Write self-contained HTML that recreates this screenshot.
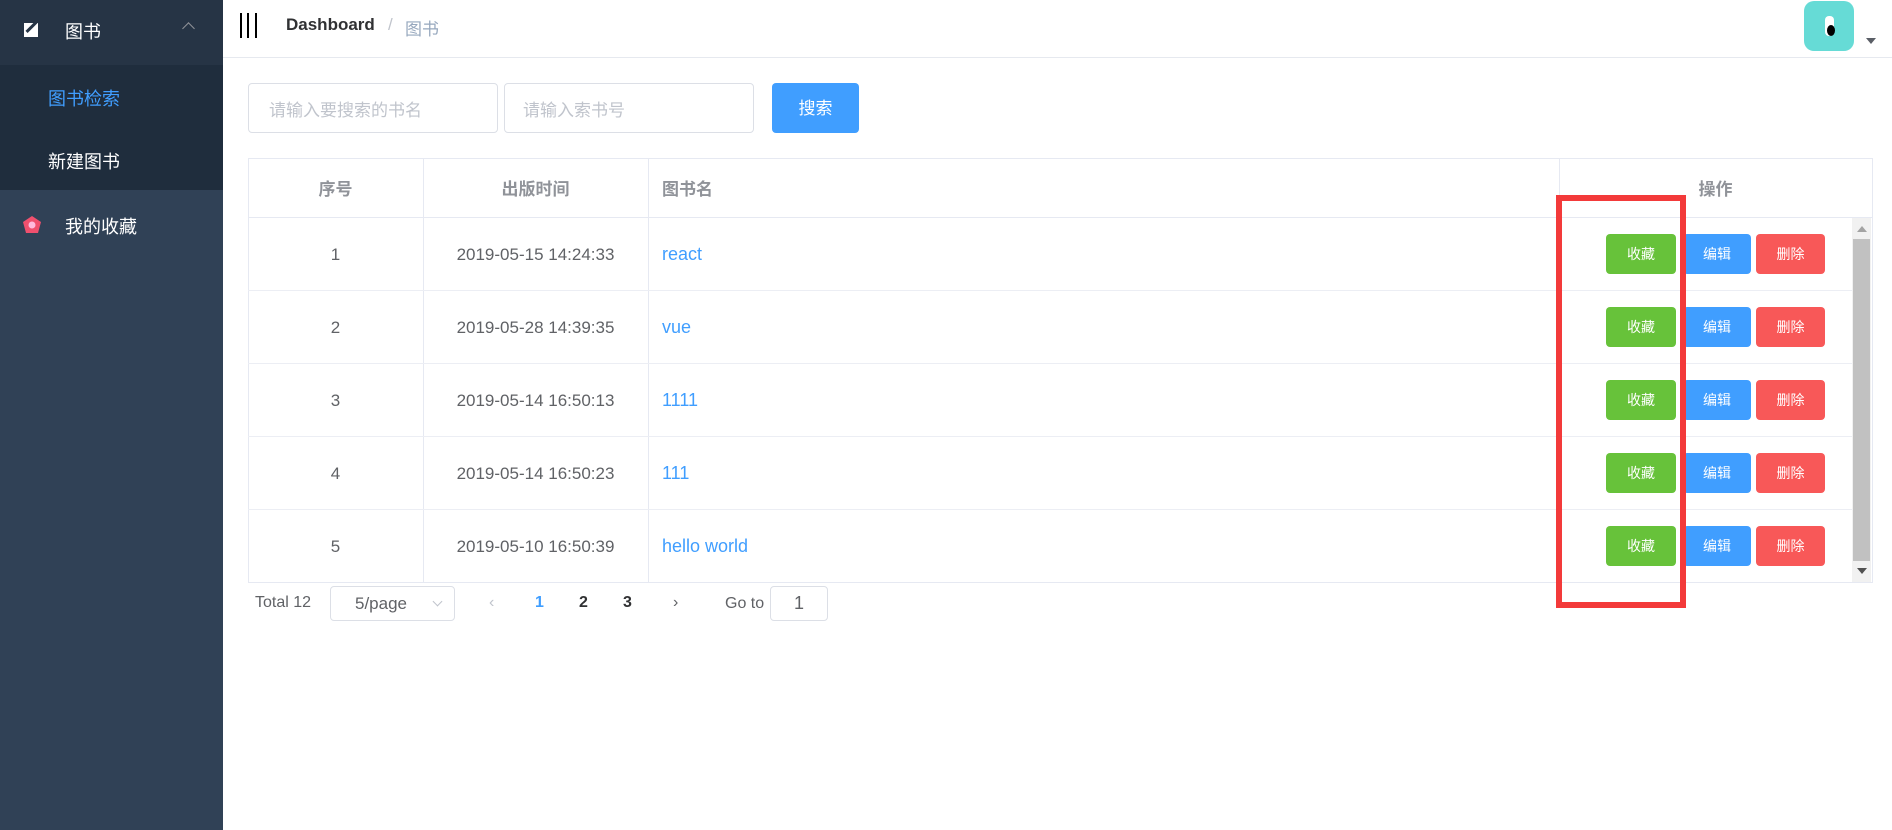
<!DOCTYPE html>
<html><head><meta charset="utf-8"><style>
*{box-sizing:border-box;margin:0;padding:0}
body{width:1892px;height:830px;overflow:hidden;background:#fff;font-family:"Liberation Sans","Noto Sans CJK SC",sans-serif;position:relative}
.abs{position:absolute}
.side{left:0;top:0;width:223px;height:830px;background:#304156}
.cell{position:absolute;display:flex;align-items:center;font-size:17px;color:#606266}
.btn{position:absolute;height:40px;border-radius:4px;color:#fff;font-size:14px;display:flex;align-items:center;justify-content:center}
</style></head><body>
<div class="abs side"></div>
<div class="abs" style="left:0;top:0;width:223px;height:65px;background:#263445"></div>
<div class="abs" style="left:0;top:65px;width:223px;height:125px;background:#1f2d3d"></div>
<div class="abs" style="left:24px;top:23px;width:14px;height:14px;background:#fff"></div>
<div class="abs" style="left:30px;top:20px;width:3px;height:14px;background:#263445;transform:rotate(45deg)"></div>
<div class="abs" style="left:65px;top:18px;font-size:18px;color:#fff">图书</div>
<div class="abs" style="left:184px;top:24px;width:9px;height:9px;border-left:1.5px solid #909399;border-top:1.5px solid #909399;transform:rotate(45deg)"></div>
<div class="abs" style="left:48px;top:85px;font-size:18px;color:#409eff">图书检索</div>
<div class="abs" style="left:48px;top:148px;font-size:18px;color:#fff">新建图书</div>
<svg class="abs" style="left:23px;top:216px" width="18" height="17" viewBox="0 0 18 17"><polygon points="9,0 18,6 15,17 3,17 0,6" fill="#f0506e"/><circle cx="9" cy="9" r="3.5" fill="#fbd"/></svg>
<div class="abs" style="left:65px;top:213px;font-size:18px;color:#fff">我的收藏</div>

<div class="abs" style="left:223px;top:57px;width:1669px;height:1px;background:#e6e9ef"></div>
<div class="abs" style="left:240px;top:13px;width:2px;height:25px;background:#000"></div>
<div class="abs" style="left:247px;top:13px;width:2px;height:25px;background:#000"></div>
<div class="abs" style="left:255px;top:13px;width:2px;height:25px;background:#000"></div>
<div class="abs" style="left:286px;top:15px;font-size:17px;font-weight:bold;color:#303133">Dashboard</div>
<div class="abs" style="left:388px;top:15px;font-size:17px;color:#c0c4cc">/</div>
<div class="abs" style="left:405px;top:15px;font-size:17px;color:#97a8be">图书</div>
<div class="abs" style="left:1804px;top:1px;width:50px;height:50px;border-radius:10px;background:#66dbd6"></div>
<div class="abs" style="left:1825px;top:16px;width:9px;height:20px;background:#fff;border-radius:4px"></div>
<div class="abs" style="left:1827px;top:25px;width:8px;height:11px;background:#000;border-radius:50%"></div>
<div class="abs" style="left:1866px;top:38px;border-left:5px solid transparent;border-right:5px solid transparent;border-top:6px solid #5a5e66"></div>

<div class="abs" style="left:248px;top:83px;width:250px;height:50px;border:1px solid #dcdfe6;border-radius:4px;font-size:17px;color:#c0c4cc;padding:12px 20px">请输入要搜索的书名</div>
<div class="abs" style="left:504px;top:83px;width:250px;height:50px;border:1px solid #dcdfe6;border-radius:4px;font-size:17px;color:#c0c4cc;padding:12px 18px">请输入索书号</div>
<div class="abs" style="left:772px;top:83px;width:87px;height:50px;background:#409eff;border-radius:4px;font-size:17px;color:#fff;display:flex;align-items:center;justify-content:center;padding-bottom:4px">搜索</div>

<div class="abs" style="left:248px;top:158px;width:1625px;height:425px;border:1px solid #e6e9f2"></div>
<div class="abs" style="left:423px;top:158px;width:1px;height:424px;background:#e6e9f2"></div>
<div class="abs" style="left:648px;top:158px;width:1px;height:424px;background:#e6e9f2"></div>
<div class="abs" style="left:1559px;top:158px;width:1px;height:59px;background:#e6e9f2"></div>
<div class="abs" style="left:248px;top:217px;width:1624px;height:1px;background:#e6e9f2"></div>
<div class="abs" style="left:248px;top:290px;width:1604px;height:1px;background:#eceef4"></div>
<div class="abs" style="left:248px;top:363px;width:1604px;height:1px;background:#eceef4"></div>
<div class="abs" style="left:248px;top:436px;width:1604px;height:1px;background:#eceef4"></div>
<div class="abs" style="left:248px;top:509px;width:1604px;height:1px;background:#eceef4"></div>
<div class="cell" style="left:248px;top:158px;width:175px;height:59px;justify-content:center;font-weight:bold;color:#909399">序号</div>
<div class="cell" style="left:423px;top:158px;width:225px;height:59px;justify-content:center;font-weight:bold;color:#909399">出版时间</div>
<div class="cell" style="left:662px;top:158px;height:59px;font-weight:bold;color:#909399">图书名</div>
<div class="cell" style="left:1559px;top:158px;width:313px;height:59px;justify-content:center;font-weight:bold;color:#909399">操作</div>

<div class="abs" style="left:1852px;top:218px;width:19px;height:364px;background:#f1f1f1"></div>
<div class="abs" style="left:1853px;top:239px;width:17px;height:322px;background:#c1c1c1"></div>
<div class="abs" style="left:1857px;top:226px;border-left:5px solid transparent;border-right:5px solid transparent;border-bottom:6px solid #a3a3a3"></div>
<div class="abs" style="left:1857px;top:568px;border-left:5px solid transparent;border-right:5px solid transparent;border-top:6px solid #505050"></div>

<div class="cell" style="left:248px;top:218px;width:175px;height:73px;justify-content:center">1</div>
<div class="cell" style="left:423px;top:218px;width:225px;height:73px;justify-content:center">2019-05-15 14:24:33</div>
<div class="cell" style="left:662px;top:218px;height:73px;color:#409eff;font-size:18px">react</div>
<div class="cell" style="left:248px;top:291px;width:175px;height:73px;justify-content:center">2</div>
<div class="cell" style="left:423px;top:291px;width:225px;height:73px;justify-content:center">2019-05-28 14:39:35</div>
<div class="cell" style="left:662px;top:291px;height:73px;color:#409eff;font-size:18px">vue</div>
<div class="cell" style="left:248px;top:364px;width:175px;height:73px;justify-content:center">3</div>
<div class="cell" style="left:423px;top:364px;width:225px;height:73px;justify-content:center">2019-05-14 16:50:13</div>
<div class="cell" style="left:662px;top:364px;height:73px;color:#409eff;font-size:18px">1111</div>
<div class="cell" style="left:248px;top:437px;width:175px;height:73px;justify-content:center">4</div>
<div class="cell" style="left:423px;top:437px;width:225px;height:73px;justify-content:center">2019-05-14 16:50:23</div>
<div class="cell" style="left:662px;top:437px;height:73px;color:#409eff;font-size:18px">111</div>
<div class="cell" style="left:248px;top:510px;width:175px;height:73px;justify-content:center">5</div>
<div class="cell" style="left:423px;top:510px;width:225px;height:73px;justify-content:center">2019-05-10 16:50:39</div>
<div class="cell" style="left:662px;top:510px;height:73px;color:#409eff;font-size:18px">hello world</div>

<div class="btn" style="left:1606px;top:234px;width:70px;background:#67c23a">收藏</div><div class="btn" style="left:1683px;top:234px;width:68px;background:#409eff">编辑</div><div class="btn" style="left:1756px;top:234px;width:69px;background:#f85858">删除</div>
<div class="btn" style="left:1606px;top:307px;width:70px;background:#67c23a">收藏</div><div class="btn" style="left:1683px;top:307px;width:68px;background:#409eff">编辑</div><div class="btn" style="left:1756px;top:307px;width:69px;background:#f85858">删除</div>
<div class="btn" style="left:1606px;top:380px;width:70px;background:#67c23a">收藏</div><div class="btn" style="left:1683px;top:380px;width:68px;background:#409eff">编辑</div><div class="btn" style="left:1756px;top:380px;width:69px;background:#f85858">删除</div>
<div class="btn" style="left:1606px;top:453px;width:70px;background:#67c23a">收藏</div><div class="btn" style="left:1683px;top:453px;width:68px;background:#409eff">编辑</div><div class="btn" style="left:1756px;top:453px;width:69px;background:#f85858">删除</div>
<div class="btn" style="left:1606px;top:526px;width:70px;background:#67c23a">收藏</div><div class="btn" style="left:1683px;top:526px;width:68px;background:#409eff">编辑</div><div class="btn" style="left:1756px;top:526px;width:69px;background:#f85858">删除</div>

<div class="abs" style="left:1556px;top:195px;width:130px;height:413px;border:6px solid #f33a3a"></div>

<div class="abs" style="left:255px;top:594px;font-size:16px;color:#606266">Total 12</div>
<div class="abs" style="left:330px;top:586px;width:125px;height:35px;border:1px solid #dcdfe6;border-radius:4px;font-size:17px;color:#606266;padding:7px 24px">5/page</div>
<div class="abs" style="left:434px;top:598px;width:7px;height:7px;border-right:1px solid #c0c4cc;border-bottom:1px solid #c0c4cc;transform:rotate(45deg)"></div>
<div class="abs" style="left:489px;top:594px;font-size:16px;color:#c0c4cc">‹</div>
<div class="abs" style="left:535px;top:594px;font-size:16px;font-weight:bold;color:#409eff">1</div>
<div class="abs" style="left:579px;top:594px;font-size:16px;font-weight:bold;color:#303133">2</div>
<div class="abs" style="left:623px;top:594px;font-size:16px;font-weight:bold;color:#303133">3</div>
<div class="abs" style="left:673px;top:594px;font-size:16px;color:#606266">›</div>
<div class="abs" style="left:725px;top:595px;font-size:16px;color:#606266">Go to</div>
<div class="abs" style="left:770px;top:586px;width:58px;height:35px;border:1px solid #dcdfe6;border-radius:4px;font-size:18px;color:#606266;text-align:center;padding-top:6px">1</div>
</body></html>
